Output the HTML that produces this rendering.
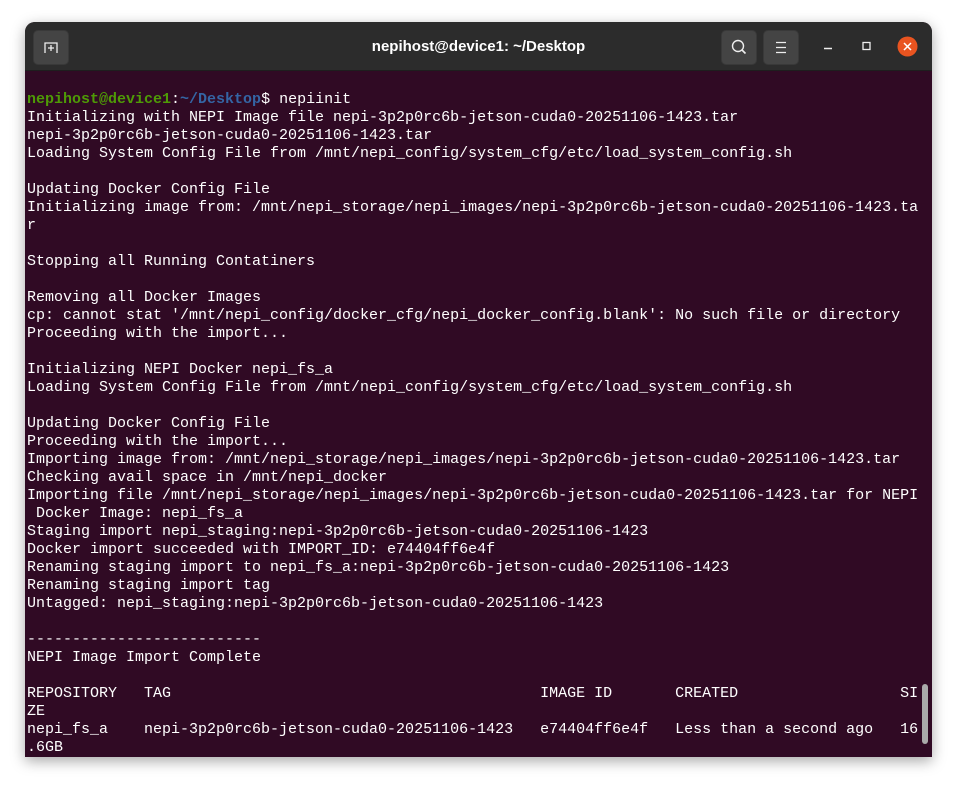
<!DOCTYPE html>
<html><head><meta charset="utf-8"><style>
body{margin:0;width:957px;height:785px;background:#fff;overflow:hidden;position:relative}
.win{position:absolute;left:25px;top:22px;width:907px;height:735px;background:#300a24;border-radius:10px 10px 0 0;overflow:hidden;box-shadow:0 4px 14px rgba(0,0,0,.35)}
.tb{position:absolute;left:0;top:0;width:907px;height:48px;background:#2c2c2c;border-bottom:1px solid #1e1e1e}
.btn{position:absolute;top:8px;width:34px;height:33px;background:#444;border-radius:5px;border:1px solid #393939}
.title{position:absolute;left:0;right:0;top:16px;text-align:center;color:#fff;font:bold 15px "Liberation Sans",sans-serif}
pre{position:absolute;left:2px;top:69px;margin:0;font:15px/18px "Liberation Mono",monospace;color:#fff}
.g{color:#4e9a06;font-weight:bold}.b{color:#3465a4;font-weight:bold}
.sb{position:absolute;left:897px;top:662px;width:6px;height:60px;background:#aaa;border-radius:3px}
</style></head><body>
<div class="win">
<div class="tb">
<div class="btn" style="left:8px"><svg width="34" height="33" viewBox="0 0 34 33"><path d="M11 22V12h12v10M14 17h6M17 14v6" stroke="#eee" stroke-width="1.3" fill="none"/></svg></div>
<div class="title">nepihost@device1: ~/Desktop</div>
<div class="btn" style="left:696px"><svg width="34" height="33" viewBox="0 0 34 33"><circle cx="16" cy="15" r="5.5" stroke="#eee" stroke-width="1.4" fill="none"/><path d="M20 19l3.5 3.5" stroke="#eee" stroke-width="1.6"/></svg></div>
<div class="btn" style="left:738px"><svg width="34" height="33" viewBox="0 0 34 33"><path d="M12 11.5h10M12 16.5h10M12 21.5h10" stroke="#eee" stroke-width="1.3"/></svg></div>
<svg style="position:absolute;left:795px;top:16px" width="20" height="14"><path d="M4 10.5h8" stroke="#eee" stroke-width="1.4"/></svg>
<svg style="position:absolute;left:835px;top:17px" width="16" height="16"><rect x="3" y="3.5" width="7" height="7" stroke="#eee" stroke-width="1.3" fill="none"/></svg>
<svg style="position:absolute;left:872px;top:14px" width="21" height="21"><circle cx="10.5" cy="10.5" r="10" fill="#e95420"/><path d="M7 7l7 7M14 7l-7 7" stroke="#fff" stroke-width="1.5"/></svg>
</div>
<pre><span class="g">nepihost@device1</span>:<span class="b">~/Desktop</span>$ nepiinit
Initializing with NEPI Image file nepi-3p2p0rc6b-jetson-cuda0-20251106-1423.tar
nepi-3p2p0rc6b-jetson-cuda0-20251106-1423.tar
Loading System Config File from /mnt/nepi_config/system_cfg/etc/load_system_config.sh

Updating Docker Config File
Initializing image from: /mnt/nepi_storage/nepi_images/nepi-3p2p0rc6b-jetson-cuda0-20251106-1423.ta
r

Stopping all Running Contatiners

Removing all Docker Images
cp: cannot stat '/mnt/nepi_config/docker_cfg/nepi_docker_config.blank': No such file or directory
Proceeding with the import...

Initializing NEPI Docker nepi_fs_a
Loading System Config File from /mnt/nepi_config/system_cfg/etc/load_system_config.sh

Updating Docker Config File
Proceeding with the import...
Importing image from: /mnt/nepi_storage/nepi_images/nepi-3p2p0rc6b-jetson-cuda0-20251106-1423.tar
Checking avail space in /mnt/nepi_docker
Importing file /mnt/nepi_storage/nepi_images/nepi-3p2p0rc6b-jetson-cuda0-20251106-1423.tar for NEPI
 Docker Image: nepi_fs_a
Staging import nepi_staging:nepi-3p2p0rc6b-jetson-cuda0-20251106-1423
Docker import succeeded with IMPORT_ID: e74404ff6e4f
Renaming staging import to nepi_fs_a:nepi-3p2p0rc6b-jetson-cuda0-20251106-1423
Renaming staging import tag
Untagged: nepi_staging:nepi-3p2p0rc6b-jetson-cuda0-20251106-1423

--------------------------
NEPI Image Import Complete

REPOSITORY   TAG                                         IMAGE ID       CREATED                  SI
ZE
nepi_fs_a    nepi-3p2p0rc6b-jetson-cuda0-20251106-1423   e74404ff6e4f   Less than a second ago   16
.6GB</pre>
<div class="sb"></div>
</div>
</body></html>
